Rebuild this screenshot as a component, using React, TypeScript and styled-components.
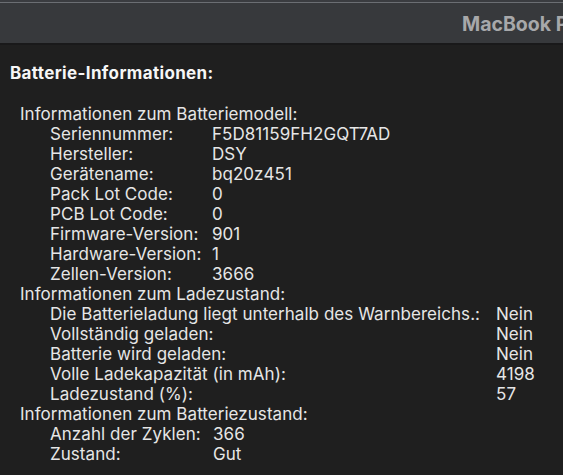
import React from "react";
import styled, { createGlobalStyle } from "styled-components";

const Global = createGlobalStyle`
  html, body { margin: 0; padding: 0; background: #1f1f1f; }
  body { font-family: Inter, "Liberation Sans", Arial, sans-serif; -webkit-font-smoothing: antialiased; }
`;

const Window = styled.div`
  width: 563px;
  height: 475px;
  overflow: hidden;
  display: flex;
  flex-direction: column;
  background: #1f1f1f;
`;

const Toolbar = styled.div`
  flex: 0 0 auto;
  height: 41px;
  border-top: 2px solid #3a3c40;
  box-shadow: inset 0 1px 0 #6b6e73;
  border-bottom: 2px solid #19191a;
  background: #37393c;
  display: flex;
  align-items: center;
  padding-left: 462px;
  overflow: hidden;
  white-space: nowrap;
`;

const Title = styled.div`
  font-size: 19.5px;
  font-weight: 700;
  color: #a7a8aa;
  margin-top: 2px;
`;

const Content = styled.div`
  flex: 1;
  padding: 18px 0 0 10px;
  color: #e6e6e6;
  font-size: 17px;
  letter-spacing: 0.05px;
`;

const Heading = styled.div`
  font-weight: 700;
  color: #f6f6f6;
  font-size: 17px;
  letter-spacing: 0.35px;
  line-height: 20px;
  margin-bottom: 21px;
`;

const Section = styled.div`
  padding-left: 10px;
`;

const SectionTitle = styled.div`
  line-height: 20px;
  height: 20px;
  white-space: nowrap;
`;

const Grid = styled.div<{ $label: number }>`
  display: grid;
  grid-template-columns: ${(p) => p.$label}px auto;
  padding-left: 30px;
  line-height: 20px;
`;

const Cell = styled.div`
  white-space: nowrap;
  height: 20px;
`;

type Group = { title: string; label: number; rows: [string, string][] };

const groups: Group[] = [
  {
    title: "Informationen zum Batteriemodell:",
    label: 162,
    rows: [
      ["Seriennummer:", "F5D81159FH2GQT7AD"],
      ["Hersteller:", "DSY"],
      ["Gerätename:", "bq20z451"],
      ["Pack Lot Code:", "0"],
      ["PCB Lot Code:", "0"],
      ["Firmware-Version:", "901"],
      ["Hardware-Version:", "1"],
      ["Zellen-Version:", "3666"],
    ],
  },
  {
    title: "Informationen zum Ladezustand:",
    label: 446,
    rows: [
      ["Die Batterieladung liegt unterhalb des Warnbereichs.:", "Nein"],
      ["Vollständig geladen:", "Nein"],
      ["Batterie wird geladen:", "Nein"],
      ["Volle Ladekapazität (in mAh):", "4198"],
      ["Ladezustand (%):", "57"],
    ],
  },
  {
    title: "Informationen zum Batteriezustand:",
    label: 163,
    rows: [
      ["Anzahl der Zyklen:", "366"],
      ["Zustand:", "Gut"],
    ],
  },
];

export default function App() {
  return (
    <>
      <Global />
      <Window>
        <Toolbar>
          <Title>MacBook Pro</Title>
        </Toolbar>
        <Content>
          <Heading>Batterie-Informationen:</Heading>
          {groups.map((g) => (
            <Section key={g.title}>
              <SectionTitle>{g.title}</SectionTitle>
              <Grid $label={g.label}>
                {g.rows.map(([k, v]) => (
                  <React.Fragment key={k}>
                    <Cell>{k}</Cell>
                    <Cell>{v}</Cell>
                  </React.Fragment>
                ))}
              </Grid>
            </Section>
          ))}
        </Content>
      </Window>
    </>
  );
}
